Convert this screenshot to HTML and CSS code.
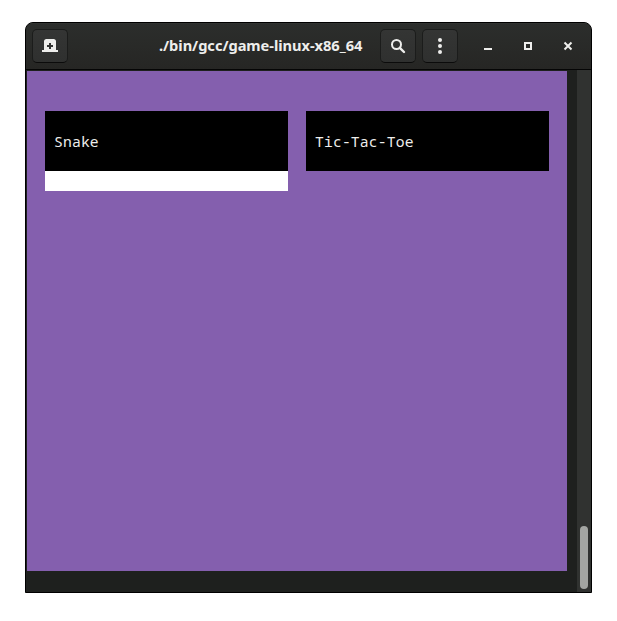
FILE: index.html
```html
<!DOCTYPE html>
<html lang="en">
<head>
<meta charset="utf-8">
<title>./bin/gcc/game-linux-x86_64</title>
<link rel="stylesheet" href="styles.css">
</head>
<body>
<div class="window">
  <header class="headerbar">
    <button class="tool" aria-label="New tab">
      <svg width="16" height="16" viewBox="0 0 16 16"><path fill="#eeeeec" fill-rule="evenodd" d="M0 14v-2h2V3.500Q2 1 4.500 1h7Q14 1 14 3.500V12h2v2zM7 5v2H5v2h2v2h2V9h2V7H9V5z"/></svg>
    </button>
    <h1 class="title">./bin/gcc/game-linux-x86_64</h1>
    <button class="tool" aria-label="Search">
      <svg width="16" height="16" viewBox="0 0 16 16" fill="none" stroke="#eeeeec"><circle cx="6.500" cy="6.500" r="4.500" stroke-width="2"/><path d="M9.800 9.800l4.200 4.200" stroke-width="2.400" stroke-linecap="round"/></svg>
    </button>
    <button class="tool menu" aria-label="Menu">
      <svg width="16" height="16" viewBox="0 0 16 16" fill="#eeeeec"><circle cx="8" cy="2" r="2"/><circle cx="8" cy="8" r="2"/><circle cx="8" cy="14" r="2"/></svg>
    </button>
    <div class="controls">
      <button aria-label="Minimize"><svg width="16" height="16"><path fill="#eeeeec" d="M4 10h8v2H4z"/></svg></button>
      <button aria-label="Maximize"><svg width="16" height="16"><path fill="none" stroke="#eeeeec" stroke-width="2" d="M5 5h6v6H5z"/></svg></button>
      <button aria-label="Close"><svg width="16" height="16"><path fill="none" stroke="#eeeeec" stroke-width="2" d="M4.500 4.500l7 7M11.500 4.500l-7 7"/></svg></button>
    </div>
  </header>
  <main class="terminal">
    <section class="screen">
      <div class="card selected">Snake</div>
      <div class="card">Tic-Tac-Toe</div>
    </section>
    <div class="scrollbar"><div class="slider"></div></div>
  </main>
</div>
</body>
</html>
```
FILE: styles.css
```css
* { box-sizing: border-box; }
body {
  margin: 0;
  padding: 22px 25px 28px;
  height: 621px;
  background: #fff;
  overflow: hidden;
}
.window {
  width: 567px;
  height: 571px;
  border: 1px solid #000;
  border-radius: 8px 8px 0 0;
  overflow: hidden;
  background: #1e201e;
}
.headerbar {
  height: 47px;
  display: flex;
  align-items: center;
  padding: 0 5px 0 6px;
  border-bottom: 1px solid #050505;
  background: linear-gradient(#2c2e2c, #262624);
  box-shadow: inset 0 1px #313331;
}
button {
  margin: 0;
  padding: 0;
  border: 0;
  background: none;
  display: flex;
  align-items: center;
  justify-content: center;
}
svg { display: block; }
.tool {
  flex: none;
  width: 36px;
  height: 34px;
  border: 1px solid #1b1c1b;
  border-bottom-color: #0b0b0b;
  border-radius: 5px;
  background: linear-gradient(#343534, #2f302f);
}
.menu { margin-left: 6px; }
.title {
  flex: 1;
  margin: 0;
  padding: 0 0 2px 91px;
  font: bold 14.67px/20px "Noto Sans", sans-serif;
  letter-spacing: -0.05px;
  color: #eeeeec;
  white-space: nowrap;
}
.controls { display: flex; gap: 16px; margin: 0 6px 0 18px; }
.controls button { width: 24px; height: 24px; }
.terminal {
  height: 522px;
  display: flex;
  justify-content: space-between;
  padding-left: 1px;
}
.screen {
  width: 540px;
  height: 500px;
  margin-top: 1px;
  padding: 40px 18px;
  display: flex;
  align-items: flex-start;
  gap: 18px;
  background: #845fae;
}
.card {
  width: 243px;
  height: 60px;
  padding-left: 9px;
  background: #000;
  color: #eeeeec;
  font: 14.67px/60px "Noto Sans Mono", "DejaVu Sans Mono", monospace;
  letter-spacing: 0.17px;
}
.selected {
  height: 80px;
  border-bottom: 20px solid #fff;
}
.scrollbar {
  width: 14px;
  padding: 0 3px 3px;
  display: flex;
  align-items: flex-end;
  background: #303230;
}
.slider {
  width: 8px;
  height: 63px;
  border-radius: 4px;
  background: #a3a5a2;
}
```
